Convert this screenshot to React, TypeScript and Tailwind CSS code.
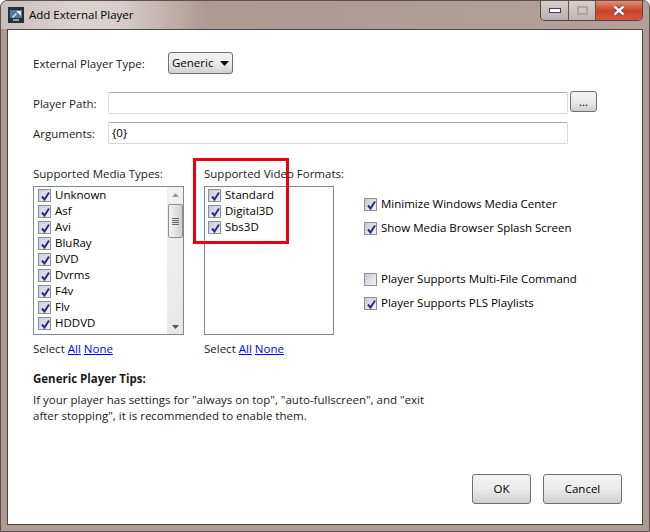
const mediaTypes = ["Unknown", "Asf", "Avi", "BluRay", "DVD", "Dvrms", "F4v", "Flv", "HDDVD"];
const videoFormats = ["Standard", "Digital3D", "Sbs3D"];

function Check({ checked = true }: { checked?: boolean }) {
  return (
    <span className="w-[13px] h-[13px] shrink-0 border border-[#8e8f8f] bg-gradient-to-br from-[#c9cad8] to-[#f2f2f6] p-px block">
      <span className="block w-full h-full">
        {checked && (
          <svg viewBox="0 0 11 11" className="w-[11px] h-[11px]">
            <path d="M2 5.5 L4.5 8.5 L9 1.5" fill="none" stroke="#2c2f8c" strokeWidth="2" />
          </svg>
        )}
      </span>
    </span>
  );
}

function CheckRow({ label, checked }: { label: string; checked?: boolean }) {
  return (
    <div className="flex items-center gap-1 h-4 text-black">
      <Check checked={checked} />
      <span>{label}</span>
    </div>
  );
}

function SelectLinks() {
  return (
    <div className="mt-[6px] h-4 leading-4">
      Select <a className="text-[#0000ff] underline">All</a> <a className="text-[#0000ff] underline">None</a>
    </div>
  );
}

function WinButton({ label, width }: { label: string; width: string }) {
  return (
    <button className={`${width} h-[30px] rounded-[3px] border border-[#707070] bg-gradient-to-b from-[#f2f2f2] via-[#ebebeb] to-[#cfcfcf] text-black`}>
      {label}
    </button>
  );
}

export default function App() {
  return (
    <div className="relative w-[650px] h-[532px] overflow-hidden flex flex-col rounded-t-[7px] border border-[#5a5250] bg-[#ae9993] text-[11.5px] text-[#1a1a1a] font-['Open_Sans','Noto_Sans',sans-serif]">
      {/* title bar */}
      <div className="h-[28px] shrink-0 flex items-start pl-[7px] pr-[6px] bg-[linear-gradient(90deg,#c9bebb_0%,#dcd4d1_12%,#d8cfcc_18%,#ae9993_32%,#b3a09a_100%)]">
        <svg viewBox="0 0 16 16" className="w-4 h-4 mt-[6px] shrink-0">
          <rect x="0" y="0" width="16" height="16" fill="#24303c" />
          <rect x="2" y="3" width="12" height="8" fill="#5a7590" />
          <path d="M8 4h5v5z" fill="#e6edf2" />
          <path d="M4 10l4-4 1 1-4 4z" fill="#e6edf2" />
          <rect x="5" y="12" width="6" height="2" fill="#8fa3b5" />
        </svg>
        <span className="ml-[5px] mt-[6px] leading-4 text-black">Add External Player</span>
        <div className="ml-auto flex h-[20px] w-[103px] rounded-b-[5px] border border-t-0 border-[#4d4644] overflow-hidden">
          <div className="w-[28px] flex items-center justify-center bg-gradient-to-b from-[#d9cecb] to-[#bcaeaa] border-r border-[#5e5654]">
            <span className="block w-3 h-[5px] bg-white border border-[#3c3c64]" />
          </div>
          <div className="w-[27px] flex items-center justify-center bg-gradient-to-b from-[#d9cecb] to-[#c2b6b2] border-r border-[#5e5654]">
            <span className="block w-[11px] h-[9px] border-2 border-[#b0a6a3]" />
          </div>
          <div className="flex-1 flex items-center justify-center bg-gradient-to-b from-[#e38d78] via-[#c8442a] to-[#d5553c]">
            <svg viewBox="0 0 14 11" className="w-[14px] h-[11px]">
              <path d="M2.5 1.5 L11.5 9.5 M11.5 1.5 L2.5 9.5" stroke="#3c3c50" strokeWidth="4" />
              <path d="M2.5 1.5 L11.5 9.5 M11.5 1.5 L2.5 9.5" stroke="#fff" strokeWidth="2.4" />
            </svg>
          </div>
        </div>
      </div>

      {/* client area */}
      <div className="mx-[6px] mb-[6px] flex-1 bg-white border border-[#4a4442] pl-[25px] flex flex-col">
        <div className="flex items-center mt-[22px] h-[22px]">
          <span className="w-[135px] pt-[2px]">External Player Type:</span>
          <div className="w-[65px] h-[22px] rounded-[3px] border border-[#707070] bg-gradient-to-b from-[#f2f2f2] via-[#ebebeb] to-[#d0d0d0] flex items-center pl-[3px] text-black">
            Generic
            <svg viewBox="0 0 9 5" className="w-[9px] h-[5px] ml-auto mr-[3px]">
              <path d="M0 0h9L4.5 5z" fill="#000" />
            </svg>
          </div>
        </div>

        <div className="flex items-start mt-[17px] h-[23px]">
          <span className="w-[75px] mt-[4px]">Player Path:</span>
          <div className="w-[460px] h-[22px] mt-px border border-[#d5d8e2] rounded-[2px] border-t-[#abadb3]" />
          <button className="ml-[2px] w-[27px] h-[21px] rounded-[3px] border border-[#707070] bg-gradient-to-b from-[#f2f2f2] via-[#ebebeb] to-[#cfcfcf] text-black leading-3">
            ...
          </button>
        </div>

        <div className="flex items-center mt-[8px] h-[22px]">
          <span className="w-[75px] pt-[2px]">Arguments:</span>
          <div className="w-[460px] h-[22px] border border-[#d5d8e2] rounded-[2px] border-t-[#abadb3] pl-[3px] flex items-center text-black">
            {"{0}"}
          </div>
        </div>

        <div className="flex mt-[21px]">
          <div className="w-[171px] shrink-0">
            <div className="h-[21px] pt-[1px] leading-4">Supported Media Types:</div>
            <div className="w-[151px] h-[149px] border border-[#828790] flex overflow-hidden">
              <div className="flex-1 pl-[4px] overflow-hidden">
                {mediaTypes.map((t) => (
                  <CheckRow key={t} label={t} />
                ))}
              </div>
              <div className="w-[17px] bg-gradient-to-b from-[#f1f1f1] to-[#e8e8e8] flex flex-col items-center border-l border-white">
                <svg viewBox="0 0 7 4" className="w-[7px] h-1 mt-[6px]">
                  <path d="M3.5 0L7 4H0z" fill="#9a9a9a" />
                </svg>
                <div className="w-[15px] h-[34px] mt-[7px] rounded-[2px] border border-[#8e8f8f] bg-gradient-to-r from-[#f4f4f4] to-[#d0d0d0] flex flex-col items-center justify-center gap-px">
                  <span className="block w-[7px] h-px bg-[#666]" />
                  <span className="block w-[7px] h-px bg-[#666]" />
                  <span className="block w-[7px] h-px bg-[#666]" />
                  <span className="block w-[7px] h-px bg-[#666]" />
                </div>
                <svg viewBox="0 0 7 4" className="w-[7px] h-1 mt-auto mb-[5px]">
                  <path d="M0 0h7L3.5 4z" fill="#555" />
                </svg>
              </div>
            </div>
            <SelectLinks />
          </div>

          <div className="w-[160px] shrink-0">
            <div className="h-[21px] pt-[1px] leading-4">Supported Video Formats:</div>
            <div className="w-[130px] h-[149px] border border-[#828790] pl-[3px]">
              {videoFormats.map((t) => (
                <CheckRow key={t} label={t} />
              ))}
            </div>
            <SelectLinks />
          </div>

          <div className="pt-[31px] flex flex-col">
            <CheckRow label="Minimize Windows Media Center" />
            <div className="mt-2">
              <CheckRow label="Show Media Browser Splash Screen" />
            </div>
            <div className="mt-[35px]">
              <CheckRow label="Player Supports Multi-File Command" checked={false} />
            </div>
            <div className="mt-2">
              <CheckRow label="Player Supports PLS Playlists" />
            </div>
          </div>
        </div>

        <div className="mt-[14px] font-bold h-4 leading-4">Generic Player Tips:</div>
        <div className="mt-[5px] w-[400px] leading-4">
          If your player has settings for "always on top", "auto-fullscreen", and "exit after stopping", it is recommended to enable them.
        </div>

        <div className="mt-auto mb-[20px] mr-[20px] flex justify-end gap-3">
          <WinButton label="OK" width="w-[59px]" />
          <WinButton label="Cancel" width="w-[79px]" />
        </div>
      </div>

      {/* red annotation */}
      <div className="absolute left-[192px] top-[157px] w-[96px] h-[86px] border-[3px] border-[#e8000d]" />
    </div>
  );
}
